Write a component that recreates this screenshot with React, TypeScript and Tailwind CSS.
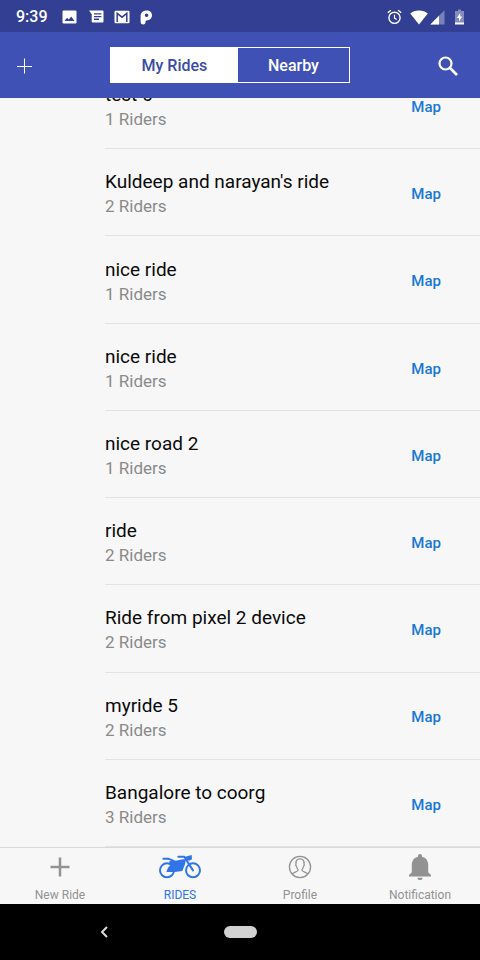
import { useState } from "react";
import type { ReactNode } from "react";
import clsx from "clsx";

type Ride = { id: number; title: string; riders: number };

const RIDES: Ride[] = [
  { id: 1, title: "test 6", riders: 1 },
  { id: 2, title: "Kuldeep and narayan's ride", riders: 2 },
  { id: 3, title: "nice ride", riders: 1 },
  { id: 4, title: "nice ride", riders: 1 },
  { id: 5, title: "nice road 2", riders: 1 },
  { id: 6, title: "ride", riders: 2 },
  { id: 7, title: "Ride from pixel 2 device", riders: 2 },
  { id: 8, title: "myride 5", riders: 2 },
  { id: 9, title: "Bangalore to coorg", riders: 3 },
];

function StatusBar() {
  return (
    <div className="flex h-8 shrink-0 items-center justify-between bg-[#323f92] px-4 pt-0.5 text-white">
      <div className="flex items-center">
        <span className="w-[46px] text-base font-medium">9:39</span>
        {/* picture */}
        <svg width="15" height="14" viewBox="0 0 15 14">
          <path
            fill="currentColor"
            fillRule="evenodd"
            d="M1.5 0.5h12a1 1 0 0 1 1 1v11a1 1 0 0 1-1 1h-12a1 1 0 0 1-1-1v-11a1 1 0 0 1 1-1zM2.5 11h10L9.2 6.4 6.8 9.6 5.1 7.7z"
          />
        </svg>
        {/* messages */}
        <svg width="15" height="14" viewBox="0 0 15 14" className="ml-3">
          <path
            fill="currentColor"
            fillRule="evenodd"
            d="M0 0.5h13.5a1 1 0 0 1 1 1v10a1 1 0 0 1-1 1H3.7a1 1 0 0 1-1-1V4.2zM5 3.2v1.3h7.4V3.2zM5 5.9v1.3h7.4V5.9zM5 8.6v1.3h5V8.6z"
          />
        </svg>
        {/* mail */}
        <svg width="16" height="14" viewBox="0 0 16 14" className="ml-2.5">
          <rect x="0.5" y="0.8" width="15" height="12.4" rx="1.2" fill="currentColor" />
          <path
            fill="none"
            stroke="#323f92"
            strokeWidth="1.5"
            d="M3.2 12V3.400L8 7.200l4.800-3.800V12"
          />
        </svg>
        {/* parking */}
        <svg width="13" height="15" viewBox="0 0 13 15" className="ml-2.5">
          <path
            fill="currentColor"
            fillRule="evenodd"
            d="M6.6.4c3.3 0 5.4 2 5.4 4.9 0 3-2.3 5-5.3 5.1-.9 0-1 .4-1.1 1.2-.1 1.8-.8 2.9-2.4 2.9-1.7 0-2.6-1.1-2.6-3V5.8C.6 2.5 3.2.4 6.6.4zM6.6 3.5a1.800 1.800 0 1 0 0 3.600 1.800 1.800 0 0 0 0-3.600z"
          />
        </svg>
      </div>
      <div className="flex items-center">
        {/* alarm */}
        <svg width="15" height="16" viewBox="0 0 15 16" fill="none" stroke="currentColor">
          <circle cx="7.5" cy="8.8" r="5.6" strokeWidth="1.4" />
          <path d="M7.5 5.8v3.3l2.2 1.3" strokeWidth="1.2" />
          <path d="M.8 3.8 3.9 1.2M14.2 3.8 11.1 1.2" strokeWidth="1.4" />
        </svg>
        {/* wifi */}
        <svg width="18" height="15" viewBox="0 0 18 15" className="ml-2">
          <path fill="currentColor" d="M9 14.500.2 3.500C2.500 1.500 5.500.5 9 .5s6.500 1 8.800 3z" />
        </svg>
        {/* signal */}
        <svg width="15" height="15" viewBox="0 0 15 15" className="ml-0.5">
          <path fill="currentColor" opacity="0.35" d="M14.5.3v14.2H.3z" />
          <path fill="currentColor" d="M9 5.800v8.700H.3z" />
        </svg>
        {/* battery */}
        <svg width="9" height="16" viewBox="0 0 9 16" className="ml-2.5">
          <path fill="currentColor" opacity="0.4" d="M3 .5h3v1.500h3v12H0V2h3z" />
          <path fill="currentColor" d="M0 13.500h9v2H0zM5.200 4 1.800 9h2.200v3.500L7.200 7.500H5.200z" />
        </svg>
      </div>
    </div>
  );
}

function MotorbikeIcon() {
  return (
    <svg width="42" height="24" viewBox="0 0 126 72" fill="none" stroke="currentColor">
      <circle cx="24" cy="46" r="21" strokeWidth="6" />
      <circle cx="102" cy="46" r="21" strokeWidth="6" />
      {/* seat */}
      <path d="M13 11h15l14 6" strokeWidth="6" strokeLinecap="round" />
      {/* tank and engine */}
      <path
        d="M30 20l12-6 8 3 22-4h9l-3 15-8 20-22 3H22l5-13 7-8z"
        fill="currentColor"
        stroke="none"
      />
      {/* handlebar, fork and headlight */}
      <path d="M58 5h18l6 10 20 31" strokeWidth="6" strokeLinecap="round" strokeLinejoin="round" />
      <path d="M79 5l8-2 11-3 1 13-8 4-12-2z" fill="currentColor" stroke="none" />
    </svg>
  );
}

function AddIcon() {
  return (
    <svg width="20" height="20" viewBox="0 0 20 20" fill="none" stroke="currentColor" strokeWidth="2.5">
      <path d="M10 .5v19M.5 10h19" />
    </svg>
  );
}

function ProfileIcon() {
  return (
    <svg width="24" height="24" viewBox="0 0 24 24" fill="none" stroke="currentColor" strokeWidth="1.3">
      <circle cx="12" cy="12" r="10.6" />
      <path d="M4.200 19c1-1.400 2.800-1.900 4.300-2.500 1.500-.5 1.700-1.100 1.500-2-.8-.8-1.300-1.900-1.500-3-.8-.8-.9-2-.5-2.600C7.700 5.600 9 3.900 12 3.900s4.300 1.700 4 5c.4.600.3 1.800-.5 2.600-.2 1.100-.7 2.200-1.500 3-.2.900 0 1.500 1.500 2 1.500.6 3.300 1.100 4.300 2.500" />
    </svg>
  );
}

function BellIcon() {
  return (
    <svg width="22" height="26" viewBox="0 0 22 26" fill="currentColor">
      <path d="M11 0c1.200 0 2 .8 2 2v.7c3.900.9 6.200 4 6.200 8v7.500L22 21v1.500H0V21l2.800-2.800v-7.500c0-4 2.300-7.100 6.200-8V2c0-1.200.8-2 2-2z" />
      <path d="M8.400 23.800h5.200a2.600 2.300 0 0 1-5.200 0z" />
    </svg>
  );
}

function Segment({
  label,
  active,
  onClick,
}: {
  label: string;
  active: boolean;
  onClick: () => void;
}) {
  return (
    <button
      type="button"
      aria-pressed={active}
      onClick={onClick}
      className={clsx(
        "pt-0.5 text-base font-medium",
        active ? "bg-white text-[#3b4ba3]" : "text-white",
      )}
    >
      {label}
    </button>
  );
}

function RideRow({ ride }: { ride: Ride }) {
  return (
    <li className="ml-[105px] flex min-h-[87px] items-center justify-between border-b border-[#e3e3e3] pt-1 pr-[39px]">
      <div>
        <p className="text-[19px] leading-6 text-[#0a0a0a]">{ride.title}</p>
        <p className="text-[17px] leading-6 text-[#8a8a8a]">{ride.riders} Riders</p>
      </div>
      <button type="button" className="text-[15px] font-medium text-[#1b78d6]">
        Map
      </button>
    </li>
  );
}

function TabButton({
  label,
  active,
  children,
}: {
  label: string;
  active?: boolean;
  children: ReactNode;
}) {
  return (
    <button
      type="button"
      className={clsx(
        "flex flex-col items-center",
        active ? "text-[#2f74e8]" : "text-[#929292]",
      )}
    >
      <span className="flex h-[38px] items-center">{children}</span>
      <span className="text-xs leading-[18px]">{label}</span>
    </button>
  );
}

export default function App() {
  const [tab, setTab] = useState<"mine" | "nearby">("mine");

  return (
    <div className="flex h-screen w-full flex-col overflow-hidden bg-[#f7f7f7] font-['Roboto',sans-serif]">
      <StatusBar />

      <header className="grid h-[66px] shrink-0 grid-cols-[110px_1fr_130px] items-center bg-[#3f51b5] text-white">
        <button type="button" aria-label="Add ride" className="justify-self-start pt-0.5 pl-[17px]">
          <svg width="16" height="16" viewBox="0 0 16 16" fill="none" stroke="currentColor">
            <path d="M7.500 .5v15M0 8.500h15" />
          </svg>
        </button>
        <div className="grid h-9 grid-cols-[8fr_7fr] border border-white">
          <Segment label="My Rides" active={tab === "mine"} onClick={() => setTab("mine")} />
          <Segment label="Nearby" active={tab === "nearby"} onClick={() => setTab("nearby")} />
        </div>
        <button type="button" aria-label="Search" className="justify-self-end pt-0.5 pr-5">
          <svg width="24" height="24" viewBox="0 0 24 24" fill="none" stroke="currentColor">
            <circle cx="9.5" cy="9.5" r="6" strokeWidth="2.2" />
            <path d="M14 14l7 7" strokeWidth="2.6" />
          </svg>
        </button>
      </header>

      {/* List is scrolled a little, so the first row slides under the header */}
      <main className="min-h-0 flex-1 overflow-hidden">
        <ul className="-mt-9 grid h-[calc(100%+36px)] auto-rows-fr">
          {RIDES.map((ride) => (
            <RideRow key={ride.id} ride={ride} />
          ))}
        </ul>
      </main>

      <nav className="grid h-[57px] shrink-0 grid-cols-4 border-t border-[#d9d9d9]">
        <TabButton label="New Ride">
          <AddIcon />
        </TabButton>
        <TabButton label="RIDES" active>
          <MotorbikeIcon />
        </TabButton>
        <TabButton label="Profile">
          <ProfileIcon />
        </TabButton>
        <TabButton label="Notification">
          <BellIcon />
        </TabButton>
      </nav>

      {/* System navigation */}
      <div className="grid h-14 shrink-0 grid-cols-[108px_1fr_108px] items-center bg-black">
        <button type="button" aria-label="Back" className="justify-self-end">
          <svg width="8" height="12" viewBox="0 0 8 12" fill="none" stroke="#dddddd" strokeWidth="2">
            <path d="M7 1L2 6l5 5" />
          </svg>
        </button>
        <button
          type="button"
          aria-label="Home"
          className="h-3 w-[33px] justify-self-center rounded-full bg-[#d2d2d2]"
        />
      </div>
    </div>
  );
}
